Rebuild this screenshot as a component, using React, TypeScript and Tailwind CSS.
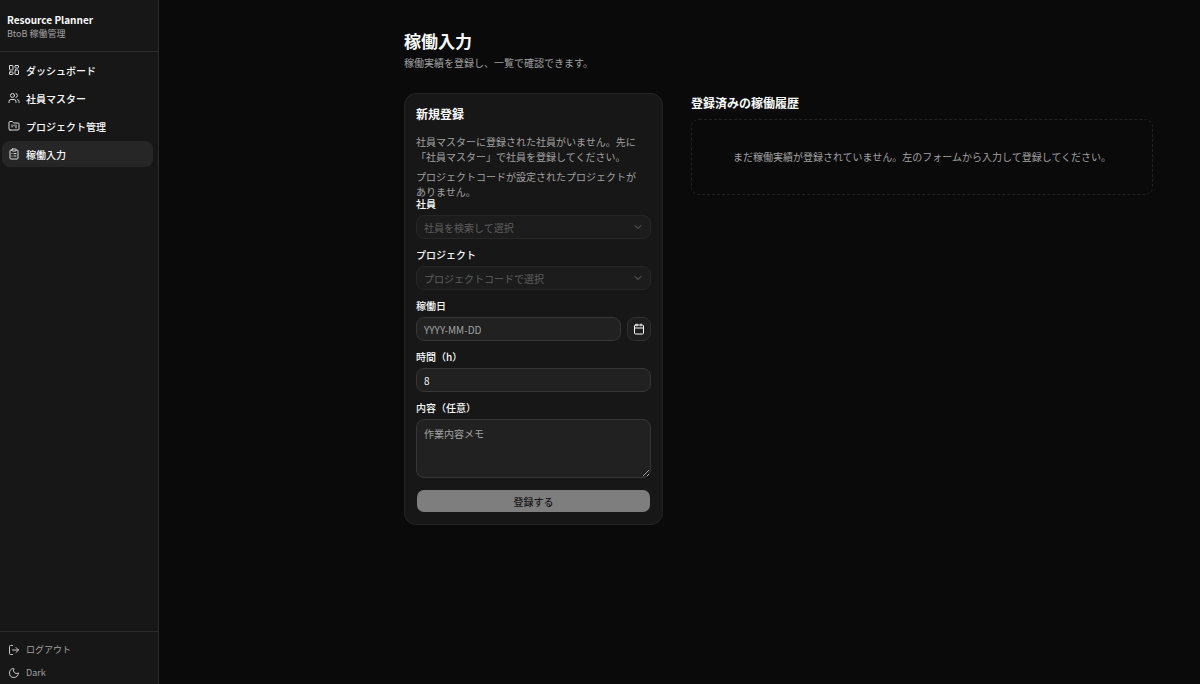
import {
  Calendar,
  ChevronDown,
  ClipboardList,
  FolderKanban,
  LayoutDashboard,
  LogOut,
  Moon,
  Users,
} from "lucide-react";

const navItems = [
  { label: "ダッシュボード", icon: LayoutDashboard, active: false },
  { label: "社員マスター", icon: Users, active: false },
  { label: "プロジェクト管理", icon: FolderKanban, active: false },
  { label: "稼働入力", icon: ClipboardList, active: true },
];

const fieldClass = "flex flex-col gap-[6px]";
const labelClass = "text-[10px] leading-none font-medium";
const controlClass =
  "block h-6 w-full rounded-lg border border-[#363636] bg-[#212121] px-[7px] text-[10px] placeholder:text-[#a1a1a1] outline-none";

function Sidebar() {
  return (
    <aside className="flex w-[159px] shrink-0 flex-col border-r border-[#2b2b2b] bg-[#171717]">
      <div className="border-b border-[#2b2b2b] px-[7px] pt-3 pb-[10px]">
        <p className="text-[10px] leading-[15px] font-bold">Resource Planner</p>
        <p className="text-[9px] leading-[14px] text-[#a1a1a1]">BtoB 稼働管理</p>
      </div>

      <nav className="flex flex-1 flex-col gap-[2px] py-[5px] pr-[5px] pl-[2px]">
        {navItems.map((item) => (
          <a
            key={item.label}
            href="#"
            aria-current={item.active ? "page" : undefined}
            className={`flex h-[26px] items-center gap-[6px] rounded-lg px-[6px] text-[10px] font-medium ${
              item.active ? "bg-[#262626]" : ""
            }`}
          >
            <item.icon size={12} className="text-[#dcdcdc]" />
            {item.label}
          </a>
        ))}
      </nav>

      <div className="flex flex-col border-t border-[#2b2b2b] px-2 pt-[6px] text-[9px] text-[#a1a1a1]">
        <button type="button" className="flex h-6 items-center gap-[6px]">
          <LogOut size={12} className="text-[#c8c8c8]" />
          ログアウト
        </button>
        <button type="button" className="flex h-[22px] items-center gap-[6px]">
          <Moon size={12} className="text-[#c8c8c8]" />
          Dark
        </button>
      </div>
    </aside>
  );
}

function SelectField({
  id,
  label,
  placeholder,
}: {
  id: string;
  label: string;
  placeholder: string;
}) {
  return (
    <div className={fieldClass}>
      <label htmlFor={id} className={labelClass}>
        {label}
      </label>
      <div className="relative">
        <select
          id={id}
          disabled
          className={`${controlClass} appearance-none text-[#a1a1a1] opacity-50`}
        >
          <option>{placeholder}</option>
        </select>
        <ChevronDown
          size={12}
          className="pointer-events-none absolute top-[6px] right-[7px] text-[#6e6e6e]"
        />
      </div>
    </div>
  );
}

function WorkLogForm() {
  return (
    <form className="rounded-xl border border-[#242424] bg-[#171717] p-[11px]">
      <h2 className="text-[12px] leading-[18px] font-bold">新規登録</h2>
      <div className="mt-[11px] flex flex-col gap-[5px] pr-2 text-[10px] leading-[15px] text-[#a1a1a1]">
        <p>
          社員マスターに登録された社員がいません。先に「社員マスター」で社員を登録してください。
        </p>
        <p>プロジェクトコードが設定されたプロジェクトがありません。</p>
      </div>

      <div className="flex flex-col gap-[11px]">
        <SelectField id="employee" label="社員" placeholder="社員を検索して選択" />
        <SelectField id="project" label="プロジェクト" placeholder="プロジェクトコードで選択" />

        <div className={fieldClass}>
          <label htmlFor="date" className={labelClass}>
            稼働日
          </label>
          <div className="flex gap-[6px]">
            <input id="date" type="text" placeholder="YYYY-MM-DD" className={controlClass} />
            <button
              type="button"
              aria-label="カレンダーを開く"
              className="flex size-6 shrink-0 items-center justify-center rounded-lg border border-[#303030] bg-[#1e1e1e]"
            >
              <Calendar size={12} />
            </button>
          </div>
        </div>

        <div className={fieldClass}>
          <label htmlFor="hours" className={labelClass}>
            時間（h）
          </label>
          <input
            id="hours"
            type="text"
            inputMode="decimal"
            defaultValue="8"
            className={controlClass}
          />
        </div>

        <div className={fieldClass}>
          <label htmlFor="memo" className={labelClass}>
            内容（任意）
          </label>
          <textarea
            id="memo"
            placeholder="作業内容メモ"
            className="block h-[59px] w-full resize-y rounded-lg border border-[#363636] bg-[#212121] px-[7px] py-[6px] text-[10px] leading-[15px] placeholder:text-[#a1a1a1] outline-none"
          />
        </div>

        <button
          type="submit"
          disabled
          className="h-6 rounded-lg border border-transparent bg-[#7e7e7e] bg-clip-padding text-[10px] font-medium text-[#171717]"
        >
          登録する
        </button>
      </div>
    </form>
  );
}

export default function App() {
  return (
    <div
      lang="ja"
      className="flex min-h-screen bg-[#0a0a0a] font-['Noto_Sans_CJK_JP',sans-serif] text-[#fafafa]"
    >
      <Sidebar />

      <main className="min-w-0 flex-1 pt-7 pr-[47px] pb-8 pl-6">
        <div className="ml-auto w-full max-w-[749px]">
          <h1 className="text-[17px] leading-[26px] font-bold">稼働入力</h1>
          <p className="mt-px text-[10px] leading-[16px] text-[#a1a1a1]">
            稼働実績を登録し、一覧で確認できます。
          </p>

          <div className="mt-[22px] grid grid-cols-[259px_1fr] items-start gap-7">
            <WorkLogForm />

            <section>
              <h2 className="text-[12px] leading-[20px] font-bold">登録済みの稼働履歴</h2>
              <div className="mt-[6px] rounded-lg border border-dashed border-[#222222] px-6 py-[30px] text-center text-[10px] leading-[14px] text-[#a1a1a1]">
                まだ稼働実績が登録されていません。左のフォームから入力して登録してください。
              </div>
            </section>
          </div>
        </div>
      </main>
    </div>
  );
}
